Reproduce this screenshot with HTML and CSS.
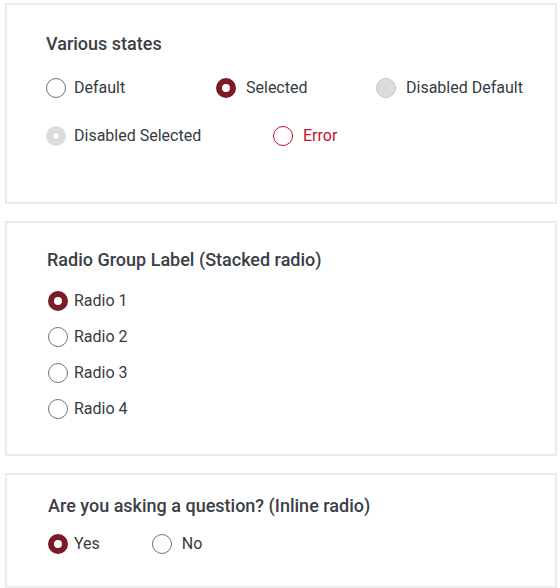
FILE: index.html
```html
<!DOCTYPE html>
<html lang="en">
<head>
<meta charset="utf-8">
<title>Radio buttons</title>
<link rel="stylesheet" href="styles.css">
</head>
<body>
<main class="page">
  <section class="card card-states">
    <h2 class="card-title">Various states</h2>
    <div class="states-row row-one">
      <label class="radio"><span class="dot"></span><span class="label">Default</span></label>
      <label class="radio gap-wide"><span class="dot dot-checked"></span><span class="label">Selected</span></label>
      <label class="radio gap-wide"><span class="dot dot-disabled"></span><span class="label">Disabled Default</span></label>
    </div>
    <div class="states-row row-two">
      <label class="radio"><span class="dot dot-disabled-checked"></span><span class="label">Disabled Selected</span></label>
      <label class="radio gap-wide"><span class="dot dot-error"></span><span class="label label-error">Error</span></label>
    </div>
  </section>

  <section class="card card-stacked">
    <h2 class="card-title">Radio Group Label (Stacked radio)</h2>
    <div class="stack">
      <label class="radio tight"><span class="dot dot-checked"></span><span class="label">Radio 1</span></label>
      <label class="radio tight"><span class="dot"></span><span class="label">Radio 2</span></label>
      <label class="radio tight"><span class="dot"></span><span class="label">Radio 3</span></label>
      <label class="radio tight"><span class="dot"></span><span class="label">Radio 4</span></label>
    </div>
  </section>

  <section class="card card-inline">
    <h2 class="card-title">Are you asking a question? (Inline radio)</h2>
    <div class="inline">
      <label class="radio tight"><span class="dot dot-checked"></span><span class="label">Yes</span></label>
      <label class="radio gap-wide"><span class="dot"></span><span class="label">No</span></label>
    </div>
  </section>
</main>
</body>
</html>
```

FILE: styles.css
```css
* { box-sizing: border-box; }

html, body {
  margin: 0;
  padding: 0;
  background: #ffffff;
}

body {
  font-family: Roboto, "Liberation Sans", Arial, sans-serif;
  color: #353b42;
  font-size: 16px;
  line-height: 24px;
}

.page {
  display: flex;
  flex-direction: column;
  gap: 17px;
  padding: 3px 0 0 5px;
  width: 557px;
}

.card {
  border: 2px solid #ebebeb;
  background: #fff;
}

.card-title {
  margin: 0;
  font-size: 18px;
  line-height: 24px;
  font-weight: 500;
  color: #3a4047;
}

.card-states {
  padding: 27px 20px 55px 39px;
  height: 201px;
}

.card-stacked {
  padding: 25px 20px 34px 40px;
  height: 235px;
}

.card-inline {
  padding: 19px 20px 30px 41px;
}

.states-row {
  display: grid;
}

.row-one {
  margin-top: 20px;
  grid-template-columns: 170px 160px auto;
}

.row-two {
  margin-top: 24px;
  grid-template-columns: 227px auto;
}

.radio {
  display: flex;
  align-items: center;
  gap: 8px;
  height: 24px;
}

.radio.gap-wide { gap: 10px; }
.radio.tight { gap: 6px; }

.dot {
  flex: none;
  width: 20px;
  height: 20px;
  border-radius: 50%;
  border: 1px solid #727272;
  background: #fff;
}

.dot-checked {
  border: 6px solid #7a1b25;
  background: #fff;
}

.dot-disabled {
  border: 1px solid #c4c4c4;
  background: #dcdcdc;
}

.dot-disabled-checked {
  border: 6px solid #dcdcdc;
  background: #fff;
  box-shadow: 0 0 0 1px #d0d0d0 inset;
}

.dot-error {
  border: 1px solid #c8102e;
}

.label {
  white-space: nowrap;
  color: #353b42;
}

.label-error {
  color: #c8102e;
}

.stack {
  margin-top: 17px;
  display: flex;
  flex-direction: column;
  gap: 12px;
}

.stack .dot { margin-left: 1px; }

.inline {
  margin-top: 14px;
  display: flex;
  gap: 52px;
}
```
